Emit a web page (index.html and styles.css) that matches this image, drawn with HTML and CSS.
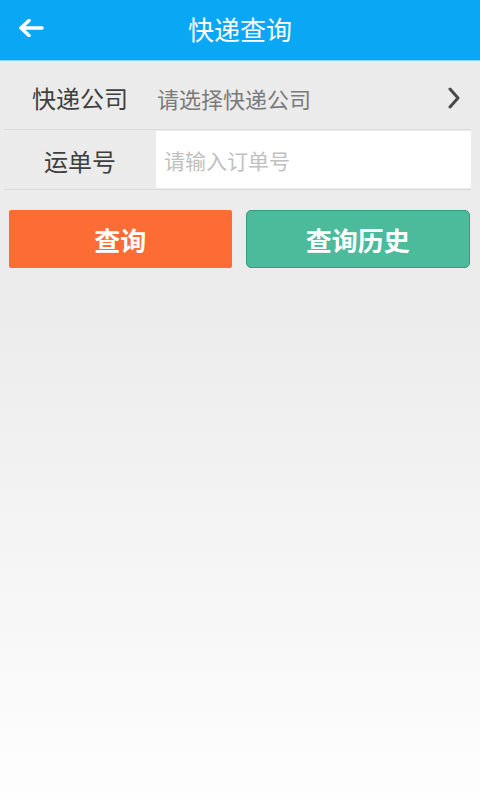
FILE: index.html
```html
<!DOCTYPE html>
<html lang="zh-CN">
<head>
  <meta charset="UTF-8">
  <meta name="viewport" content="width=device-width, initial-scale=1.0">
  <title>快递查询</title>
  <link rel="stylesheet" href="styles.css">
</head>
<body>
  <div class="page">
    <div class="header">
      <button class="back-btn">
        <svg width="26" height="18" viewBox="0 0 26 18">
          <path d="M3 9 H24 M11 1.5 L3 9 L11 16.5" fill="none" stroke="#fff" stroke-width="3.6" stroke-linecap="round" stroke-linejoin="round"/>
        </svg>
      </button>
      <h1>快递查询</h1>
    </div>

    <div class="form">
      <div class="row company-row">
        <span class="label">快递公司</span>
        <span class="picker">请选择快递公司</span>
        <svg class="chevron" width="12" height="22" viewBox="0 0 12 22">
          <path d="M2 2 L10 11 L2 20" fill="none" stroke="#4a4a4a" stroke-width="3" stroke-linecap="round" stroke-linejoin="round"/>
        </svg>
      </div>
      <div class="row number-row">
        <span class="label">运单号</span>
        <input type="text" class="number-input" placeholder="请输入订单号">
      </div>
    </div>

    <div class="actions">
      <button class="btn btn-query">查询</button>
      <button class="btn btn-history">查询历史</button>
    </div>
  </div>
</body>
</html>
```

FILE: styles.css
```css
* {
  margin: 0;
  padding: 0;
  box-sizing: border-box;
}

body {
  font-family: "Noto Sans CJK SC", "Noto Sans", sans-serif;
  width: 480px;
  height: 800px;
  overflow: hidden;
}

.page {
  height: 800px;
  background: linear-gradient(to bottom, #ebebeb 0%, #ececec 40%, #fefefe 100%);
}

.header {
  height: 61px;
  background-color: #0aa7f5;
  border-bottom: 1px solid #8ad4f8;
  display: flex;
  align-items: center;
  justify-content: center;
  position: relative;
}

.header h1 {
  color: #fff;
  font-size: 26px;
  font-weight: normal;
  line-height: 1;
  margin-top: -2px;
}

.back-btn {
  position: absolute;
  left: 18px;
  top: 19px;
  background: none;
  border: none;
  display: flex;
}

.form {
  padding: 0 9px 0 4px;
}

.row {
  display: flex;
  align-items: center;
  border-bottom: 1px solid #dadada;
}

.company-row {
  height: 69px;
  padding-top: 5px;
}

.number-row {
  height: 60px;
  padding-top: 1px;
}

.label {
  width: 152px;
  text-align: center;
  font-size: 24px;
  color: #3f3f3f;
  flex-shrink: 0;
}

.picker {
  flex: 1;
  font-size: 22px;
  color: #7a7a7a;
  padding-left: 1px;
}

.chevron {
  margin-right: 11px;
  margin-top: 1px;
}

.number-input {
  flex: 1;
  height: 57px;
  align-self: flex-start;
  border: none;
  outline: none;
  background-color: #fff;
  font-family: inherit;
  font-size: 21px;
  color: #333;
  padding-left: 8px;
}

.number-input::placeholder {
  color: #c0c0c0;
}

.actions {
  display: flex;
  gap: 14px;
  padding: 20px 10px 0 9px;
}

.btn {
  flex: 1;
  height: 58px;
  border: none;
  color: #fff;
  font-family: inherit;
  font-size: 26px;
  font-weight: bold;
}

.btn-query {
  background-color: #fe6c35;
  border-radius: 2px;
}

.btn-history {
  background-color: #4bbb9c;
  border: 1px solid #3a9a80;
  border-radius: 5px;
}
```
